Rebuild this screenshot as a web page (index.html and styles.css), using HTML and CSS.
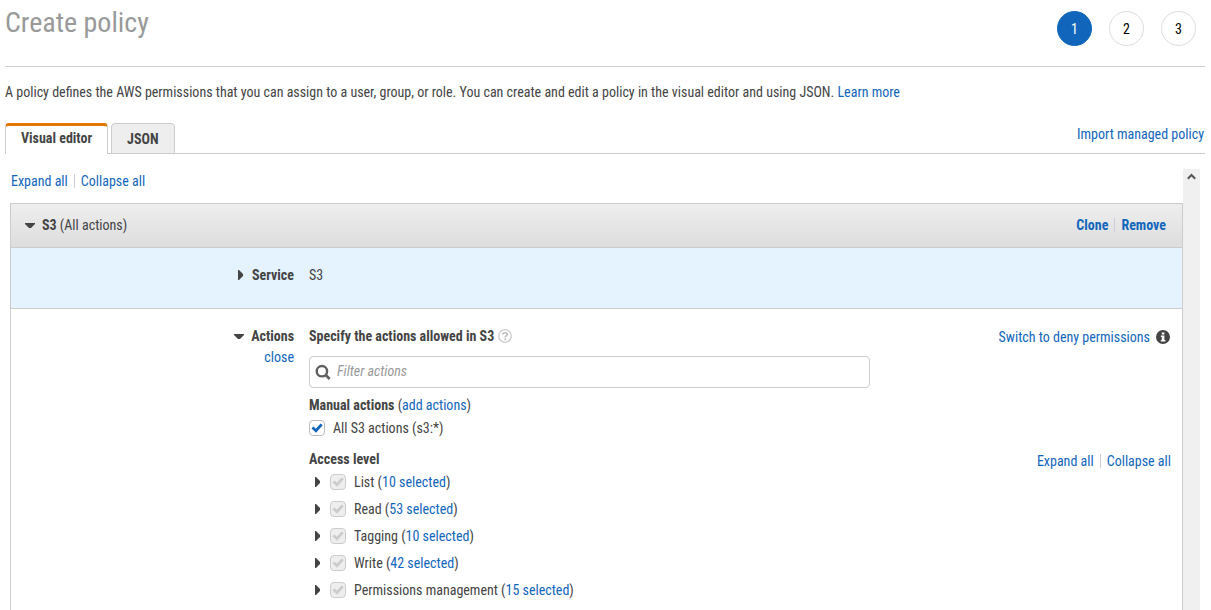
FILE: index.html
```html
<!DOCTYPE html>
<html lang="en">
<head>
<meta charset="utf-8">
<title>Create policy</title>
<link rel="stylesheet" href="styles.css">
</head>
<body>
<svg class="sprites" aria-hidden="true">
  <symbol id="caret-down" viewBox="0 0 10 10"><path d="M0 3h10v1L6 8H4L0 4z"/></symbol>
  <symbol id="caret-right" viewBox="0 0 10 10"><path d="M3 0h1l4 4v2l-4 4H3z"/></symbol>
</svg>
<header class="page-header">
  <h1 class="page-title">Create policy</h1>
  <ol class="steps">
    <li class="step step-current" aria-current="step">1</li>
    <li class="step">2</li>
    <li class="step">3</li>
  </ol>
</header>
<main class="page-main">
  <p class="intro">A policy defines the AWS permissions that you can assign to a user, group, or role. You can create and edit a policy in the visual editor and using JSON. <a href="#learn">Learn more</a></p>
  <div class="tab-bar">
    <div class="tabs" role="tablist">
      <button class="tab tab-active" type="button" role="tab" aria-selected="true">Visual editor</button>
      <button class="tab" type="button" role="tab" aria-selected="false">JSON</button>
    </div>
    <a class="import-link" href="#import">Import managed policy</a>
  </div>
  <div class="editor">
    <div class="editor-content">
      <nav class="link-pair editor-toggle"><a href="#expand">Expand all</a><a href="#collapse">Collapse all</a></nav>
      <section class="panel">
        <header class="panel-header">
          <button class="disclosure" type="button" aria-expanded="true"><svg class="caret"><use href="#caret-down"/></svg><span><b>S3</b> (All actions)</span></button>
          <nav class="link-pair link-pair-bold"><a href="#clone">Clone</a><a href="#remove">Remove</a></nav>
        </header>
        <div class="columns service">
          <button class="disclosure row-label" type="button" aria-expanded="false"><svg class="caret"><use href="#caret-right"/></svg><b>Service</b></button>
          <span>S3</span>
        </div>
        <div class="columns actions">
          <div class="row-label-stack">
            <button class="disclosure row-label" type="button" aria-expanded="true"><svg class="caret"><use href="#caret-down"/></svg><b>Actions</b></button>
            <a href="#close">close</a>
          </div>
          <div class="actions-main">
            <div class="heading-line">
              <label for="filter">Specify the actions allowed in S3</label>
              <svg class="icon" viewBox="0 0 14 14" role="img" aria-label="Help"><circle cx="7" cy="7" r="6.3" fill="none" stroke="#ccc" stroke-width="1.3"/><path d="M4.8 5.4C4.8 3.1 9.2 3.1 9.2 5.4C9.2 6.9 7.2 6.7 7.2 8.4" fill="none" stroke="#bbb" stroke-width="1.6"/><path d="M6.3 9.5h1.8v1.7H6.3z" fill="#bbb"/></svg>
            </div>
            <div class="search">
              <svg class="search-icon" viewBox="0 0 16 16" aria-hidden="true"><circle cx="6.9" cy="7.2" r="5.2" fill="none" stroke="#606060" stroke-width="2.4"/><path d="M10.7 11l4 4" stroke="#606060" stroke-width="2.6"/></svg>
              <input class="search-input" id="filter" type="text" placeholder="Filter actions">
            </div>
            <div class="manual"><b>Manual actions</b> (<a href="#add">add actions</a>)</div>
            <label class="check-line"><input class="check" type="checkbox" checked><span>All S3 actions (s3:*)</span></label>
          </div>
          <div class="side-link"><a href="#deny">Switch to deny permissions</a><svg class="icon" viewBox="0 0 14 14" role="img" aria-label="Information"><circle cx="7" cy="7" r="7" fill="#444"/><path d="M5.8 2.4h2.6v2H5.8zM4.9 5.4h3.5v4.5h1v1.6H4.8V9.9h1V7h-.9z" fill="#fff"/></svg></div>
        </div>
        <div class="columns access">
          <div class="access-main">
            <b class="access-title">Access level</b>
            <ul class="levels">
              <li class="level"><svg class="caret"><use href="#caret-right"/></svg><input class="check" type="checkbox" id="list" checked disabled><span><label for="list">List</label> (<a href="#list">10 selected</a>)</span></li>
              <li class="level"><svg class="caret"><use href="#caret-right"/></svg><input class="check" type="checkbox" id="read" checked disabled><span><label for="read">Read</label> (<a href="#read">53 selected</a>)</span></li>
              <li class="level"><svg class="caret"><use href="#caret-right"/></svg><input class="check" type="checkbox" id="tagging" checked disabled><span><label for="tagging">Tagging</label> (<a href="#tagging">10 selected</a>)</span></li>
              <li class="level"><svg class="caret"><use href="#caret-right"/></svg><input class="check" type="checkbox" id="write" checked disabled><span><label for="write">Write</label> (<a href="#write">42 selected</a>)</span></li>
              <li class="level"><svg class="caret"><use href="#caret-right"/></svg><input class="check" type="checkbox" id="permissions" checked disabled><span><label for="permissions">Permissions management</label> (<a href="#permissions">15 selected</a>)</span></li>
            </ul>
          </div>
          <nav class="link-pair access-toggle"><a href="#expand-levels">Expand all</a><a href="#collapse-levels">Collapse all</a></nav>
        </div>
      </section>
    </div>
    <div class="scroll-track" aria-hidden="true"><svg class="scroll-arrow" viewBox="0 0 9 7"><path d="M0.8 5.8L4.5 2L8.2 5.8" fill="none" stroke="#555" stroke-width="2"/></svg></div>
  </div>
</main>
</body>
</html>
```
FILE: styles.css
```css
* { box-sizing: border-box; }

body {
  display: flex;
  flex-direction: column;
  height: 100vh;
  margin: 0;
  padding: 0 6px 0 5px;
  overflow: hidden;
  background: #fff;
  color: #444;
  font-family: "Roboto Condensed", Roboto, sans-serif;
  font-size: 14px;
  line-height: 20px;
}

a { color: #1166bb; text-decoration: none; }
b, label[for="filter"] { font-weight: 700; }
button, input { font: inherit; color: inherit; }
.sprites { display: none; }

.page-header {
  display: flex;
  justify-content: space-between;
  height: 67px;
  border-bottom: 1px solid #ccc;
}
.page-title {
  margin: 0;
  padding-top: 5px;
  color: #999;
  font-size: 28px;
  font-weight: 400;
  line-height: 36px;
}
.steps {
  display: flex;
  gap: 17px;
  margin: 11px 9px 0 0;
  padding: 0;
  list-style: none;
}
.step {
  width: 35px;
  height: 35px;
  border: 1px solid #ddd;
  border-radius: 50%;
  color: #000;
  line-height: 34px;
  text-align: center;
}
.step-current { border-color: #1166bb; background: #1166bb; color: #fff; }

.page-main { display: flex; flex: 1; flex-direction: column; min-height: 0; }
.intro { margin: 15px 0 21px; }

.tab-bar {
  display: flex;
  justify-content: space-between;
  height: 31px;
  border-bottom: 1px solid #ccc;
}
.tabs { display: flex; gap: 3px; height: 31px; }
.tab {
  padding: 0 15px;
  border: 1px solid #ccc;
  border-radius: 4px 4px 0 0;
  background: #eee;
  font-weight: 700;
}
.tab-active {
  padding-bottom: 4px;
  border-top: 3px solid #e07700;
  border-bottom: 0;
  background: #fff;
}
.import-link { padding: 1px 1px 0 0; }

.editor { display: flex; flex: 1; min-height: 0; padding: 15px 5px 0; }
.editor-content { display: flex; flex: 1; flex-direction: column; }
.scroll-track { width: 17px; background: #f0f0f0; }
.scroll-arrow { display: block; width: 9px; height: 7px; margin: 4px auto 0; }

.link-pair { display: flex; align-items: center; }
.link-pair a + a { margin-left: 6px; padding-left: 6px; border-left: 1px solid #ccd; line-height: 14px; }
.link-pair-bold { font-weight: 700; }
.editor-toggle { padding: 2px 1px 12px; }

.panel { flex: 1; border: 1px solid #ccc; border-bottom: 0; }
.panel-header {
  display: flex;
  justify-content: space-between;
  align-items: center;
  height: 44px;
  padding: 0 16px 2px 14px;
  border-bottom: 1px solid #ccc;
  background: linear-gradient(#eee, #ddd);
}
.disclosure {
  display: flex;
  align-items: center;
  gap: 7px;
  padding: 0;
  border: 0;
  background: none;
}
.caret { flex: none; width: 10px; height: 10px; fill: #444; }

.columns {
  display: grid;
  grid-template-columns: 283px 1fr 286px;
  column-gap: 15px;
  padding-right: 11px;
}
.row-label { justify-content: flex-end; }
.service { height: 61px; padding-top: 17px; border-bottom: 1px solid #ccc; background: #e5f2ff; align-items: start; }
.actions { padding-top: 17px; }
.row-label-stack { display: flex; flex-direction: column; align-items: flex-end; gap: 1px; }
.heading-line { display: flex; align-items: center; gap: 4px; }
.icon { width: 14px; height: 14px; }
.search {
  display: flex;
  align-items: center;
  height: 32px;
  margin: 10px 0 7px;
  padding: 0 5px;
  border: 1px solid #ccc;
  border-radius: 4px;
}
.search-icon { width: 16px; height: 16px; }
.search-input { flex: 1; min-width: 0; padding: 0 6px 2px; border: 0; outline: 0; background: none; }
.search-input::placeholder { color: #999; font-style: italic; opacity: 1; }
.check-line { display: flex; align-items: center; gap: 8px; margin-top: 3px; }
.check {
  appearance: none;
  flex: none;
  width: 16px;
  height: 16px;
  margin: 0;
  border: 1px solid #bbb;
  border-radius: 4px;
  background: #fff;
}
.check::before {
  display: block;
  width: 14px;
  height: 14px;
  background: #1166bb;
  clip-path: polygon(10% 52%, 26% 40%, 41% 56%, 76% 18%, 91% 31%, 43% 84%);
  content: "";
}
.check:disabled { border-color: #ccc; background: #eee; }
.check:disabled::before { background: #ccc; }
.side-link { display: flex; justify-content: flex-end; align-items: center; gap: 6px; height: 22px; }
.side-link .icon { margin-right: 1px; }

.access { padding-top: 11px; }
.access-main { grid-column: 2; }
.access-title { display: block; }
.levels { display: grid; gap: 7px; margin: 3px 0 0; padding: 0 0 0 3px; list-style: none; }
.level { display: flex; align-items: center; gap: 8px; }
.access-toggle { align-self: start; justify-content: flex-end; padding-top: 2px; }
```
